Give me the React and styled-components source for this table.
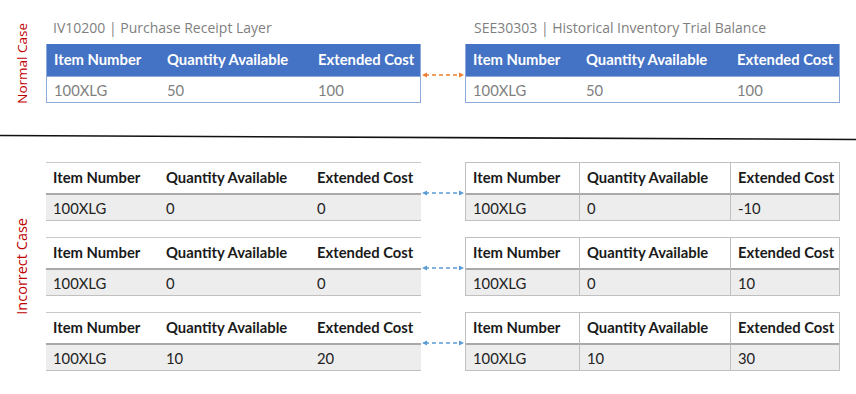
import React from 'react';
import styled, { createGlobalStyle, css } from 'styled-components';

const GlobalStyle = createGlobalStyle`
  html, body {
    margin: 0;
    padding: 0;
    background: #ffffff;
  }
  body {
    font-family: "Open Sans", "Liberation Sans", sans-serif;
  }
`;

const Page = styled.div`
  width: 856px;
  height: 394px;
  display: flex;
  flex-direction: column;
  overflow: hidden;
`;

const Section = styled.section`
  display: flex;
  height: ${p => p.height}px;
  padding-top: ${p => p.top}px;
  box-sizing: border-box;
`;

const Side = styled.div`
  width: 46px;
  display: flex;
  justify-content: flex-start;
  padding-left: 14px;
  padding-top: ${p => p.offset}px;
  box-sizing: border-box;
`;

const SideLabel = styled.div`
  writing-mode: vertical-rl;
  transform: rotate(180deg);
  color: #c00000;
  font-size: ${p => p.size || 13.5}px;
  line-height: 16px;
  height: max-content;
  white-space: nowrap;
`;

const Stack = styled.div`
  display: flex;
  flex-direction: column;
  gap: ${p => p.gap || 0}px;
`;

const Pair = styled.div`
  display: grid;
  grid-template-columns: 375px 44px 375px;
  align-items: start;
`;

const Title = styled.div`
  color: #7f7f7f;
  font-size: 14px;
  line-height: 20px;
  padding-left: ${p => p.indent || 7}px;
  height: 26px;
  white-space: nowrap;
`;

const Connector = styled.div`
  padding-top: ${p => p.offset}px;
  display: flex;
  svg {
    display: block;
  }
`;

const Table = styled.div`
  display: grid;
  grid-template-columns: 113px 151px 1fr;
  font-family: Lato, "Liberation Sans", sans-serif;
  font-size: 14.8px;
  box-sizing: border-box;
  ${p => p.variant === 'blue' && css`
    border: 1px solid #8eaadb;
    border-top: none;
  `}
  ${p => p.variant === 'plain' && css`
    border-top: 1px solid #c9c9c9;
    border-bottom: 1px solid #c0c0c0;
  `}
  ${p => p.variant === 'grid' && css`
    border: 1px solid #c0c0c0;
  `}
`;

const Cell = styled.div`
  padding-left: 7px;
  display: flex;
  align-items: center;
  white-space: nowrap;
  box-sizing: border-box;
  ${p => p.head ? css`
    height: 32px;
    padding-bottom: 3px;
    font-weight: 700;
    border-bottom: 2px solid #a9a9a9;
    color: #1a1a1a;
  ` : css`
    height: 25px;
    background: #ededed;
    color: #222222;
  `}
  ${p => p.grid && p.col > 0 && css`
    border-left: 1px solid #c0c0c0;
  `}
  ${p => p.blue && p.head && css`
    background: #4472c4;
    color: #ffffff;
    border-bottom: none;
  `}
  ${p => p.blue && !p.head && css`
    background: #ffffff;
    color: #7f7f7f;
    border-top: 1px solid #8eaadb;
    height: 26px;
  `}
`;

const headers = ['Item Number', 'Quantity Available', 'Extended Cost'];

function DataTable({ variant, values }) {
  const blue = variant === 'blue';
  const grid = variant === 'grid';
  return (
    <Table variant={variant}>
      {headers.map((h, i) => (
        <Cell key={h} head col={i} blue={blue} grid={grid}>{h}</Cell>
      ))}
      {values.map((v, i) => (
        <Cell key={i} col={i} blue={blue} grid={grid}>{v}</Cell>
      ))}
    </Table>
  );
}

function Arrow({ color }) {
  return (
    <svg width="44" height="8" viewBox="0 0 44 8">
      <line x1="4" y1="4" x2="40" y2="4" stroke={color} strokeWidth="1.3" strokeDasharray="4 3" />
      <path d="M1 4 L6 1.5 L6 6.5 Z" fill={color} />
      <path d="M43 4 L38 1.5 L38 6.5 Z" fill={color} />
    </svg>
  );
}

function Divider() {
  return (
    <svg width="856" height="8" viewBox="0 0 856 8" style={{ display: 'block' }}>
      <line x1="0" y1="2.5" x2="856" y2="6.5" stroke="#111" strokeWidth="1.6" />
    </svg>
  );
}

const incorrect = [
  { left: ['100XLG', '0', '0'], right: ['100XLG', '0', '-10'] },
  { left: ['100XLG', '0', '0'], right: ['100XLG', '0', '10'] },
  { left: ['100XLG', '10', '20'], right: ['100XLG', '10', '30'] },
];

export default function App() {
  return (
    <Page>
      <GlobalStyle />
      <Section height={133} top={18}>
        <Side offset={5}>
          <SideLabel>Normal Case</SideLabel>
        </Side>
        <Stack>
          <Pair>
            <Title>IV10200 | Purchase Receipt Layer</Title>
            <div />
            <Title indent={9}>SEE30303 | Historical Inventory Trial Balance</Title>
          </Pair>
          <Pair>
            <DataTable variant="blue" values={['100XLG', '50', '100']} />
            <Connector offset={27}>
              <Arrow color="#ed7d31" />
            </Connector>
            <DataTable variant="blue" values={['100XLG', '50', '100']} />
          </Pair>
        </Stack>
      </Section>
      <Divider />
      <Section height={253} top={21}>
        <Side offset={56}>
          <SideLabel size={14.5}>Incorrect Case</SideLabel>
        </Side>
        <Stack gap={16}>
          {incorrect.map((row, i) => (
            <Pair key={i}>
              <DataTable variant="plain" values={row.left} />
              <Connector offset={27}>
                <Arrow color="#5b9bd5" />
              </Connector>
              <DataTable variant="grid" values={row.right} />
            </Pair>
          ))}
        </Stack>
      </Section>
    </Page>
  );
}
